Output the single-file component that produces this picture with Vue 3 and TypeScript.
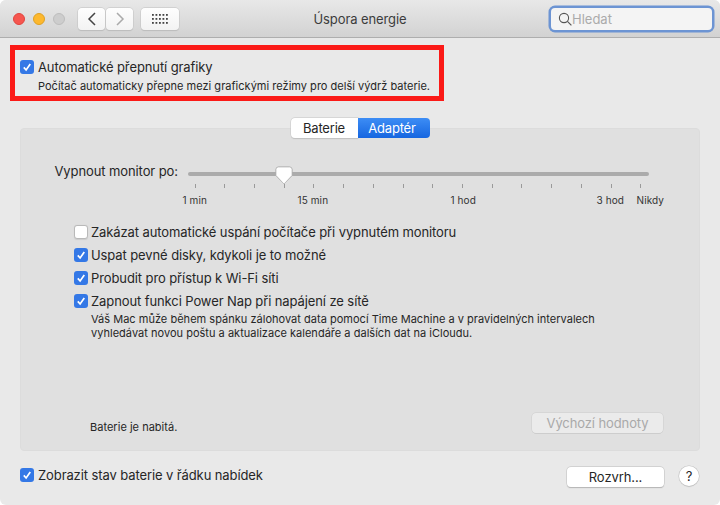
<script setup lang="ts">
const ticks: number[] = Array.from({ length: 16 }, (_, i) => i)
const labels = [
  { text: '1 min', pos: -5 },
  { text: '15 min', pos: 110 },
  { text: '1 hod', pos: 263 },
  { text: '3 hod', pos: 409 },
  { text: 'Nikdy', pos: 449 },
]
const options = [
  { text: 'Zakázat automatické uspání počítače při vypnutém monitoru', checked: false },
  { text: 'Uspat pevné disky, kdykoli je to možné', checked: true },
  { text: 'Probudit pro přístup k Wi-Fi síti', checked: true },
  { text: 'Zapnout funkci Power Nap při napájení ze sítě', checked: true },
]
</script>

<template>
  <div class="window">
    <header class="titlebar">
      <div class="lights">
        <span class="light red"></span>
        <span class="light yellow"></span>
        <span class="light grey"></span>
      </div>
      <div class="nav">
        <button class="tool">
          <svg width="10" height="16" viewBox="0 0 10 16"><path d="M8 2 2 8l6 6" fill="none" stroke="#444" stroke-width="1.5" /></svg>
        </button>
        <button class="tool">
          <svg width="10" height="16" viewBox="0 0 10 16"><path d="m2 2 6 6-6 6" fill="none" stroke="#aaa" stroke-width="1.5" /></svg>
        </button>
      </div>
      <button class="tool grid">
        <svg width="16" height="12" viewBox="0 0 16 12" fill="#444">
          <g v-for="y in [1, 5, 9]" :key="y">
            <rect v-for="x in [0, 3.5, 7, 10.5, 14]" :key="x" :x="x" :y="y" width="1.8" height="1.8" />
          </g>
        </svg>
      </button>
      <h1 class="title">Úspora energie</h1>
      <div class="search">
        <svg width="14" height="14" viewBox="0 0 14 14"><circle cx="6" cy="6" r="4.6" fill="none" stroke="#555" stroke-width="1.1" /><path d="m9.4 9.4 4 4" stroke="#555" stroke-width="1.2" /></svg>
        <span>Hledat</span>
      </div>
    </header>

    <main class="content">
      <section class="auto">
        <div class="check-row">
          <span class="check on">
            <svg width="14" height="14" viewBox="0 0 14 14"><path d="m3.8 7.4 2.3 2.6 4.2-6" fill="none" stroke="#fff" stroke-width="1.7" /></svg>
          </span>
          <span class="label">Automatické přepnutí grafiky</span>
        </div>
        <p class="note auto-note">Počítač automaticky přepne mezi grafickými režimy pro delší výdrž baterie.</p>
        <div class="highlight"></div>
      </section>

      <section class="panel">
        <div class="tabs">
          <span class="tab">Baterie</span>
          <span class="tab active">Adaptér</span>
        </div>

        <div class="slider-row">
          <span class="label slider-label">Vypnout monitor po:</span>
          <div class="slider">
            <div class="track"></div>
            <div class="ticks"><i v-for="t in ticks" :key="t"></i></div>
            <div class="scale">
              <span v-for="l in labels" :key="l.text" :style="{ left: l.pos + 'px' }">{{ l.text }}</span>
            </div>
            <svg class="thumb" width="18" height="19" viewBox="0 0 18 19">
              <path d="M3.5 1h11A2.5 2.5 0 0 1 17 3.500V9.500L9 18 1 9.500V3.500A2.500 2.500 0 0 1 3.500 1z" fill="#fff" stroke="#bdbdbd" stroke-width=".8" />
            </svg>
          </div>
        </div>

        <div class="options">
          <div v-for="o in options" :key="o.text" class="check-row">
            <span class="check" :class="{ on: o.checked }">
              <svg v-if="o.checked" width="14" height="14" viewBox="0 0 14 14"><path d="m3.8 7.4 2.3 2.6 4.2-6" fill="none" stroke="#fff" stroke-width="1.7" /></svg>
            </span>
            <span class="label">{{ o.text }}</span>
          </div>
          <p class="note nap-note">
            Váš Mac může během spánku zálohovat data pomocí Time Machine a v pravidelných intervalech<br />
            vyhledávat novou poštu a aktualizace kalendáře a dalších dat na iCloudu.
          </p>
        </div>

        <div class="panel-foot">
          <span class="note status">Baterie je nabitá.</span>
          <button class="btn disabled">Výchozí hodnoty</button>
        </div>
      </section>

      <footer class="foot">
        <div class="check-row">
          <span class="check on">
            <svg width="14" height="14" viewBox="0 0 14 14"><path d="m3.8 7.4 2.3 2.6 4.2-6" fill="none" stroke="#fff" stroke-width="1.7" /></svg>
          </span>
          <span class="label">Zobrazit stav baterie v řádku nabídek</span>
        </div>
        <button class="btn schedule">Rozvrh...</button>
        <button class="help">?</button>
      </footer>
    </main>
  </div>
</template>

<style>
html, body { margin: 0; background: #fff; }
</style>

<style scoped>
* { box-sizing: border-box; }
.window {
  width: 720px;
  height: 505px;
  background: #e9e9e9;
  border-radius: 6px;
  overflow: hidden;
  font-family: Inter, "Liberation Sans", sans-serif;
  color: #262626;
  display: flex;
  flex-direction: column;
}
.titlebar {
  height: 38px;
  flex: none;
  display: flex;
  align-items: center;
  position: relative;
  padding-left: 13px;
  background: linear-gradient(#e8e8e8, #d2d2d2);
  border-bottom: 1px solid #aeaeae;
}
.lights { display: flex; gap: 8px; width: 65px; flex: none; }
.light { width: 12px; height: 12px; border-radius: 50%; }
.red { background: #f6564f; border: 1px solid #e0443e; }
.yellow { background: #fdb82e; border: 1px solid #dea123; }
.grey { background: #cdcdcd; border: 1px solid #bdbdbd; }
.nav { display: flex; gap: 1px; margin-right: 8px; }
button { font-family: inherit; padding: 0; margin: 0; }
.tool {
  width: 27px;
  height: 22px;
  border: none;
  border-radius: 4px;
  background: linear-gradient(#fefefe, #f3f3f3);
  box-shadow: 0 0 0 .5px #c4c4c4, 0 .5px 1px #b5b5b5;
  display: flex;
  align-items: center;
  justify-content: center;
}
.grid { width: 38px; }
.title {
  position: absolute;
  left: 0;
  right: 0;
  margin: 0;
  text-align: center;
  font-size: 13px;
  font-weight: 400;
  letter-spacing: -.1px;
  color: #3c3c3c;
}
.search {
  position: absolute;
  left: 551px;
  top: 8px;
  width: 161px;
  height: 22px;
  border-radius: 4px;
  background: #f4f4f4;
  box-shadow: 0 0 0 2.500px #6c94d3;
  display: flex;
  align-items: center;
  gap: 0;
  padding-left: 7px;
  font-size: 13px;
  color: #ababab;
}
.content { flex: 1; padding: 0 20px; display: flex; flex-direction: column; }
.auto { position: relative; padding-top: 22px; height: 80px; flex: none; }
.highlight {
  position: absolute;
  left: -10px;
  top: 7px;
  width: 434px;
  height: 56px;
  border: 5px solid #fb1a17;
  pointer-events: none;
}
.check-row { display: flex; align-items: center; gap: 4px; height: 14px; }
.check {
  width: 14px;
  height: 14px;
  flex: none;
  border-radius: 3px;
  background: #fff;
  border: .5px solid #b9b9b9;
  box-shadow: 0 .5px 1px #ccc;
}
.check.on { background: #3478e6; border: none; box-shadow: none; }
.check svg { display: block; }
.label { font-size: 13px; line-height: 14px; letter-spacing: -.1px; white-space: nowrap; }
.note { font-size: 11px; line-height: 14px; margin: 0; letter-spacing: .02px; white-space: nowrap; }
.auto-note { margin: 5px 0 0 18px; }
.panel {
  height: 323px;
  flex: none;
  margin-top: 10px;
  background: #e0e0e0;
  border: 1px solid #dcdcdc;
  border-radius: 4px;
  display: flex;
  flex-direction: column;
}
.tabs {
  display: flex;
  justify-content: center;
  margin-top: -11px;
  height: 21px;
  flex: none;
}
.tab {
  width: 67px;
  height: 20px;
  background: #fff;
  border-radius: 4px 0 0 4px;
  box-shadow: 0 0 0 .5px #c8c8c8, 0 .5px 1px #bbb;
  font-size: 13px;
  line-height: 20px;
  text-align: center;
  letter-spacing: -.2px;
}
.tab.active {
  width: 72px;
  padding-right: 3px;
  border-radius: 0 4px 4px 0;
  background: linear-gradient(#3d8df5, #1666e0);
  color: #fff;
  box-shadow: none;
}
.slider-row { display: flex; margin-top: 21px; padding-left: 34px; flex: none; height: 47px; }
.slider-label { width: 133px; flex: none; padding-top: 4px; letter-spacing: -.1px; margin-left: -.500px; }
.slider { position: relative; width: 461px; padding-top: 12px; }
.track { height: 4px; border-radius: 2px; background: #ababab; }
.ticks { display: flex; justify-content: space-between; padding: 8px 7px 0 7px; }
.ticks i { width: 1px; height: 4px; background: #9a9a9a; }
.scale { position: relative; height: 14px; margin-top: 5px; font-size: 10px; line-height: 14px; letter-spacing: .1px; color: #333; }
.scale span { position: absolute; white-space: nowrap; }
.thumb { position: absolute; left: 87px; top: 6px; filter: drop-shadow(0 .5px .5px #999); }
.options { display: flex; flex-direction: column; gap: 9px; padding-left: 53px; margin-top: 18px; flex: none; }
.options .check-row { gap: 3px; }
.nap-note { margin: -5px 0 0 17px; }
.panel-foot { margin-top: auto; height: 20px; margin-bottom: 17px; display: flex; align-items: flex-start; justify-content: space-between; padding: 0 36px 0 69px; }
.status { margin-top: 7px; }
.btn {
  height: 20px;
  border: none;
  border-radius: 4px;
  background: #fff;
  box-shadow: 0 0 0 .5px #c2c2c2, 0 .5px 1px #aaa;
  font-size: 13px;
  color: #262626;
}
.btn.disabled { width: 131px; background: #ebebeb; color: #a9a9a9; box-shadow: 0 0 0 .5px #cbcbcb, 0 .5px .5px #bbb; letter-spacing: -.1px; }
.foot { display: flex; align-items: center; height: 20px; margin-top: 15px; }
.foot .check-row { flex: 1; margin-top: -2px; }
.schedule { width: 97px; margin-top: 2px; letter-spacing: -.1px; }
.help {
  width: 20px;
  height: 20px;
  margin-left: 15px;
  margin-right: 1px;
  border: none;
  border-radius: 50%;
  background: #fff;
  box-shadow: 0 0 0 .5px #c2c2c2, 0 .5px 1px #aaa;
  font-size: 13px;
  color: #262626;
}
</style>
